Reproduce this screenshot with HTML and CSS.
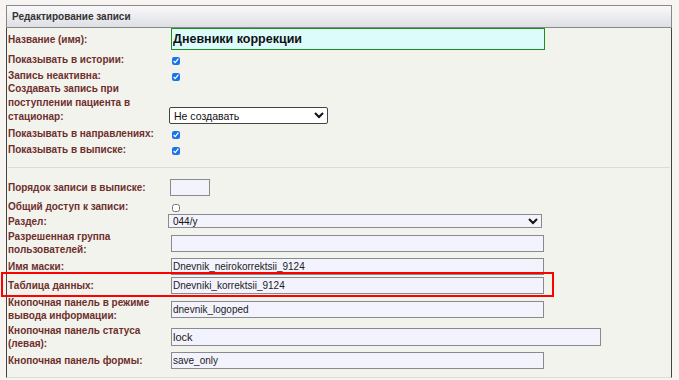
FILE: index.html
```html
<!DOCTYPE html>
<html lang="ru">
<head>
    <meta charset="UTF-8">
    <meta name="viewport" content="width=device-width, initial-scale=1.0">
    <title>Редактирование записи</title>
    <link rel="stylesheet" href="styles.css">
</head>
<body>
    <div class="panel">
        <div class="panel-title">Редактирование записи</div>
        <div class="panel-body">
            <div class="row first">
                <label class="lbl">Название (имя):</label>
                <input class="inp inp-name" type="text" value="Дневники коррекции">
            </div>
            <div class="row check">
                <label class="lbl">Показывать в истории:</label>
                <input class="cb" type="checkbox" checked>
            </div>
            <div class="row check">
                <label class="lbl">Запись неактивна:</label>
                <input class="cb" type="checkbox" checked>
            </div>
            <div class="row tall">
                <label class="lbl">Создавать запись при поступлении пациента в стационар:</label>
                <select class="sel sel-create">
                    <option>Не создавать</option>
                </select>
            </div>
            <div class="row check">
                <label class="lbl">Показывать в направлениях:</label>
                <input class="cb" type="checkbox" checked>
            </div>
            <div class="row check">
                <label class="lbl">Показывать в выписке:</label>
                <input class="cb" type="checkbox" checked>
            </div>

            <div class="sep"></div>

            <div class="row">
                <label class="lbl">Порядок записи в выписке:</label>
                <input class="inp inp-order" type="text" value="">
            </div>
            <div class="row check">
                <label class="lbl">Общий доступ к записи:</label>
                <input class="cb" type="checkbox">
            </div>
            <div class="row">
                <label class="lbl">Раздел:</label>
                <select class="sel sel-section">
                    <option>044/у</option>
                </select>
            </div>
            <div class="row">
                <label class="lbl">Разрешенная группа пользователей:</label>
                <input class="inp" type="text" value="">
            </div>
            <div class="row">
                <label class="lbl">Имя маски:</label>
                <input class="inp" type="text" value="Dnevnik_neirokorrektsii_9124">
            </div>
            <div class="row marked">
                <label class="lbl">Таблица данных:</label>
                <input class="inp" type="text" value="Dnevniki_korrektsii_9124">
                <div class="highlight"></div>
            </div>
            <div class="row">
                <label class="lbl">Кнопочная панель в режиме вывода информации:</label>
                <input class="inp" type="text" value="dnevnik_logoped">
            </div>
            <div class="row">
                <label class="lbl">Кнопочная панель статуса (левая):</label>
                <input class="inp inp-wide" type="text" value="lock">
            </div>
            <div class="row">
                <label class="lbl">Кнопочная панель формы:</label>
                <input class="inp" type="text" value="save_only">
            </div>
        </div>
    </div>
</body>
</html>
```

FILE: styles.css
```css
body {
    margin: 0;
    background-color: #f7f4f2;
    font-family: "Liberation Sans", Arial, sans-serif;
    color: #222;
}
.panel {
    margin: 5px 7px 0 6px;
}
.panel-title {
    height: 21px;
    line-height: 21px;
    padding-left: 5px;
    border: 1px solid #888;
    background: linear-gradient(to bottom, #f9f9fb, #dedfe4);
    font-size: 10px;
    font-weight: bold;
    color: #333;
}
.panel-body {
    background-color: #f3f3ee;
    border-left: 1px solid #444;
    border-right: 1px solid #444;
    border-bottom: 1px solid #dcdcd6;
    padding: 0 0 7px 1px;
}
.row {
    position: relative;
    display: grid;
    grid-template-columns: 163px 1fr;
    align-items: center;
    padding: 1px 0;
}
.row.first {
    padding: 0;
}
.row.check {
    padding: 3px 0 0;
    align-items: end;
}
.row.check .lbl {
    align-self: start;
}
.row.tall {
    padding: 0;
    align-items: end;
}
.row.tall .lbl {
    line-height: 14px;
}
.lbl {
    font-size: 10px;
    font-weight: bold;
    line-height: 13px;
    color: #6e2f2c;
}
.inp {
    box-sizing: border-box;
    width: 373px;
    height: 17px;
    margin: 0;
    padding: 0 1px;
    border: 1px solid #8a8a8a;
    background-color: #f3f3fd;
    font-family: "Liberation Sans", Arial, sans-serif;
    font-size: 10px;
    color: #222;
    outline: none;
}
.inp-name {
    width: 374px;
    height: 22px;
    border-color: #1f8c1f;
    background-color: #dcfcfc;
    font-size: 12.5px;
    font-weight: bold;
    color: #111;
}
.inp-order {
    width: 40px;
    margin-left: -1px;
}
.inp-wide {
    width: 430px;
    height: 18px;
    font-size: 11px;
}
.cb {
    width: 8px;
    height: 8px;
    margin: 0 0 1px 1px;
    accent-color: #1a73e8;
}
.sel {
    box-sizing: border-box;
    margin: 0;
    font-family: "Liberation Sans", Arial, sans-serif;
    color: #111;
}
.sel-create {
    width: 159px;
    height: 17px;
    margin-left: -2px;
    padding: 0;
    border: 1px solid #444;
    border-radius: 2px;
    background-color: #fff;
    font-size: 10.5px;
}
.sel-section {
    width: 374px;
    height: 14px;
    margin-left: -3px;
    padding: 0;
    border: 1px solid #8a8a8a;
    border-radius: 0;
    background-color: #f3f3fd;
    font-size: 10px;
}
.sep {
    margin: 11px 1px 10px 0;
    border-top: 1px solid #dcdcd4;
}
.highlight {
    position: absolute;
    left: -7px;
    top: -4px;
    width: 553px;
    height: 25px;
    box-sizing: border-box;
    border: 2px solid #f00;
    pointer-events: none;
}
```
